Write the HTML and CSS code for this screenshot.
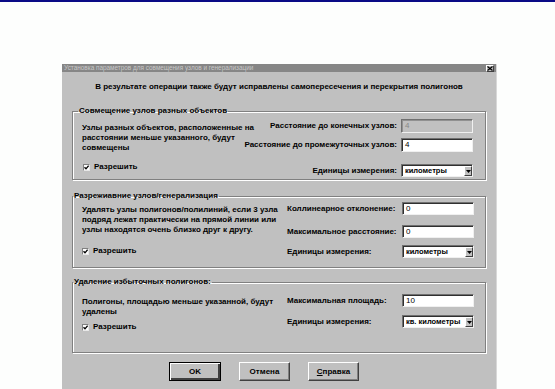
FILE: index.html
```html
<!DOCTYPE html>
<html lang="ru">
<head>
<meta charset="utf-8">
<title>Установка параметров</title>
<link rel="stylesheet" href="styles.css">
</head>
<body>
<div class="topline"></div>
<div class="dialog">
  <div class="titlebar">
    <span class="title">Установка параметров для совмещения узлов и генерализации</span>
    <span class="close"><svg width="6" height="5" viewBox="0 0 6 5"><path d="M0.5 0.5L5.5 4.5M5.5 0.5L0.5 4.5" stroke="#000" stroke-width="1.2"/></svg></span>
  </div>
  <div class="body">
    <p class="intro">В результате операции также будут исправлены самопересечения и перекрытия полигонов</p>

    <fieldset class="group g1">
      <legend class="legend-indent">Совмещение узлов разных объектов</legend>
      <div class="left">
        <p class="desc">Узлы разных объектов, расположенные на<br>расстоянии меньше указанного, будут<br>совмещены</p>
        <div class="check"><span class="box"><svg width="5" height="5" viewBox="0 0 5 5"><path d="M0.5 2.2L2 3.8L4.6 0.6" fill="none" stroke="#000" stroke-width="1.3"/></svg></span>Разрешить</div>
      </div>
      <div class="right right-aligned">
        <div class="row r1"><span class="lbl">Расстояние до конечных узлов:</span><span class="field disabled">4</span></div>
        <div class="row r2"><span class="lbl">Расстояние до промежуточных узлов:</span><span class="field">4</span></div>
        <div class="row r3"><span class="lbl">Единицы измерения:</span><span class="field select">километры<span class="drop"><svg width="5" height="3" viewBox="0 0 5 3"><path d="M0 0H5L2.5 3Z" fill="#000"/></svg></span></span></div>
      </div>
    </fieldset>

    <fieldset class="group g2">
      <legend>Разрежиавние узлов/генерализация</legend>
      <div class="left">
        <p class="desc">Удалять узлы полигонов/полилиний, если 3 узла<br>подряд лежат практически на прямой линии или<br>узлы находятся очень близко друг к другу.</p>
        <div class="check"><span class="box"><svg width="5" height="5" viewBox="0 0 5 5"><path d="M0.5 2.2L2 3.8L4.6 0.6" fill="none" stroke="#000" stroke-width="1.3"/></svg></span>Разрешить</div>
      </div>
      <div class="right left-aligned">
        <div class="row r1"><span class="lbl">Коллинеарное отклонение:</span><span class="field">0</span></div>
        <div class="row r2"><span class="lbl">Максимальное расстояние:</span><span class="field">0</span></div>
        <div class="row r3"><span class="lbl">Единицы измерения:</span><span class="field select">километры<span class="drop"><svg width="5" height="3" viewBox="0 0 5 3"><path d="M0 0H5L2.5 3Z" fill="#000"/></svg></span></span></div>
      </div>
    </fieldset>

    <fieldset class="group g3">
      <legend>Удаление избыточных полигонов:</legend>
      <div class="left">
        <p class="desc">Полигоны, площадью меньше указанной, будут<br>удалены</p>
        <div class="check"><span class="box"><svg width="5" height="5" viewBox="0 0 5 5"><path d="M0.5 2.2L2 3.8L4.6 0.6" fill="none" stroke="#000" stroke-width="1.3"/></svg></span>Разрешить</div>
      </div>
      <div class="right left-aligned">
        <div class="row r1"><span class="lbl">Максимальная площадь:</span><span class="field">10</span></div>
        <div class="row r2"><span class="lbl">Единицы измерения:</span><span class="field select">кв. километры<span class="drop"><svg width="5" height="3" viewBox="0 0 5 3"><path d="M0 0H5L2.5 3Z" fill="#000"/></svg></span></span></div>
      </div>
    </fieldset>

    <div class="buttons">
      <button class="btn default">OK</button>
      <button class="btn">Отмена</button>
      <button class="btn"><u>С</u>правка</button>
    </div>
  </div>
</div>
</body>
</html>
```

FILE: styles.css
```css
* { box-sizing: border-box; }
html, body { margin: 0; padding: 0; }
body {
  background: #fdfefd;
  width: 555px;
  height: 389px;
  overflow: hidden;
  font-family: "Liberation Sans", Arial, sans-serif;
}
.topline {
  height: 2px;
  background: #0a0a86;
}
.dialog {
  margin: 62px 0 0 62px;
  width: 435px;
  height: 340px;
  background: #c0c0c0;
  border-right: 1px solid #d8d8d8;
  font: bold 8px/10px "Liberation Sans", Arial, sans-serif;
  color: #000;
}
.titlebar {
  height: 8px;
  background: #868686;
  display: flex;
  align-items: center;
  justify-content: space-between;
  padding: 0 2px 0 2px;
}
.title {
  font: 6.4px/8px "Liberation Sans", Arial, sans-serif;
  color: #c8c8c8;
  white-space: nowrap;
}
.close {
  width: 8px;
  height: 7px;
  background: #c0c0c0;
  border: 1px solid;
  border-color: #fff #404040 #404040 #fff;
  display: flex;
  align-items: center;
  justify-content: center;
}
.close svg { display: block; }
.body {
  padding: 10px 0 0 0;
}
.intro {
  margin: 0;
  text-align: center;
  white-space: nowrap;
  height: 10px;
}
.group {
  margin: 14px 10px 0 10px;
  padding: 0 12px 0 9px;
  border: 1px solid #808080;
  box-shadow: inset 1px 1px 0 #fff, 1px 1px 0 #fff;
  display: flex;
  justify-content: space-between;
  min-width: 0;
}
.group legend {
  padding: 0 1px;
  margin-left: -9px;
  line-height: 10px;
  white-space: nowrap;
}
.group legend.legend-indent { margin-left: -4px; }
.left { display: flex; flex-direction: column; flex: 0 0 auto; width: 205px; }
.g1 .left { width: 160px; }
.desc { margin: 0; white-space: nowrap; }
.check {
  display: flex;
  align-items: center;
  height: 10px;
  padding-left: 0;
  white-space: nowrap;
}
.box {
  width: 7px;
  height: 7px;
  background: #fff;
  border: 1px solid;
  border-color: #808080 #e8e8e8 #e8e8e8 #808080;
  display: flex;
  align-items: center;
  justify-content: center;
  margin-right: 4px;
}
.box svg { display: block; }
.right { display: flex; flex-direction: column; flex: 0 0 auto; }
.row { display: flex; align-items: center; }
.right-aligned .row { justify-content: flex-end; }
.right-aligned .lbl { text-align: right; margin-right: 4px; white-space: nowrap; }
.left-aligned .lbl { width: 115px; white-space: nowrap; }
.field {
  width: 72px;
  height: 14px;
  flex: 0 0 auto;
  background: #fff;
  border: 1px solid;
  border-color: #707070 #f0f0f0 #f0f0f0 #707070;
  box-shadow: inset 1px 1px 0 #303030;
  padding-left: 3px;
  display: flex;
  align-items: center;
  font-weight: normal;
  position: relative;
}
.field.disabled { background: #c0c0c0; color: #888; box-shadow: inset 1px 1px 0 #909090; }
.field.select { height: 13px; font-size: 7.5px; font-weight: bold; }
.drop {
  position: absolute;
  right: 0;
  top: 1px;
  bottom: 0;
  width: 8px;
  background: #c0c0c0;
  border: 1px solid;
  border-color: #fff #404040 #404040 #fff;
  display: flex;
  align-items: center;
  justify-content: center;
}
.drop svg { display: block; }

/* group 1 */
.g1 { padding-bottom: 2px; }
.g1 .desc { margin-top: 7px; }
.g1 .check { margin-top: 9px; margin-left: 1px; }
.g1 .right { padding-top: 3px; }
.g1 .r2 { margin-top: 5px; }
.g1 .r3 { margin-top: 12px; }

/* group 2 */
.g2 { margin-top: 11px; padding-bottom: 9px; }
.g2 .desc { margin-top: 4px; }
.g2 .check { margin-top: 11px; }
.g2 .right { padding-top: 1px; }
.g2 .field { height: 13px; }
.g2 .r2 { margin-top: 10px; }
.g2 .r3 { margin-top: 7px; }

/* group 3 */
.g3 { margin-top: 9px; padding-bottom: 20px; }
.g3 .desc { margin-top: 10px; }
.g3 .check { margin-top: 5px; }
.g3 .right { padding-top: 7px; }
.g3 .field { height: 13px; }
.g3 .r2 { margin-top: 8px; }

.buttons {
  display: flex;
  gap: 18px;
  padding-left: 107px;
  margin-top: 9px;
}
.btn {
  width: 51px;
  height: 19px;
  background: #c0c0c0;
  border: 1px solid;
  border-color: #fff #404040 #404040 #fff;
  box-shadow: inset -1px -1px 0 #808080;
  font: bold 8px/10px "Liberation Sans", Arial, sans-serif;
  color: #000;
  padding: 0;
}
.btn.default {
  border: 1px solid #000;
  box-shadow: inset 1px 1px 0 #fff, inset -2px -2px 0 #404040;
  width: 52px;
}
.btn u { text-decoration: underline; }
```
